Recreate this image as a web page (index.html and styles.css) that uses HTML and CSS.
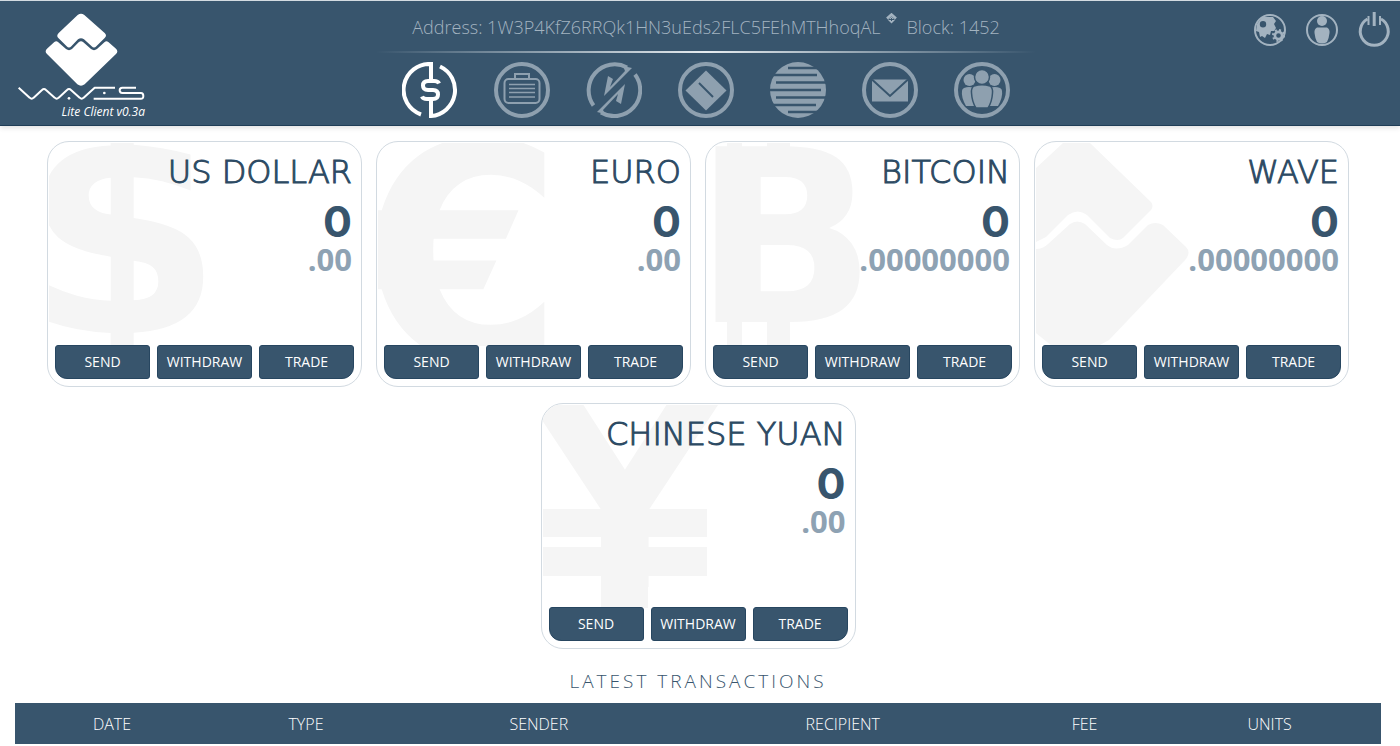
FILE: index.html
```html
<!DOCTYPE html>
<html lang="en">
<head>
<meta charset="utf-8">
<meta name="viewport" content="width=device-width, initial-scale=1">
<title>Waves Lite Client</title>
<link rel="stylesheet" href="styles.css">
</head>
<body>
<header class="topbar">
  <div class="brand">
    <svg class="brand-logo" viewBox="54 39 381 264" aria-label="Waves" role="img">
      <path fill="#fff" d="M233 45Q243 38 253 45L314 99Q322 107 314 114L289 139Q282 146 275 139L252 118Q243 111 234 118L214 139Q207 146 200 139L175 114Q168 107 176 99Z"/>
      <path fill="#fff" d="M163 126Q169 121 174 126L198 147Q207 154 216 147L236 127Q243 121 250 127L273 147Q282 154 291 147L314 126Q319 121 325 126L348 146Q356 154 348 162L254 253Q243 261 232 253L141 162Q133 154 141 146Z"/>
      <g fill="none" stroke="#fff" stroke-width="6" stroke-linejoin="round">
        <path d="M56 263L89 293Q95 299 101 293L126 270Q132 264 138 270L164 293Q170 299 176 293L201 270Q207 264 213 270L239 293Q245 299 251 293L284 263H345"/>
        <path d="M408 263H367Q359 263 359 271T367 279H423Q430 279 430 288T421 296H281"/>
      </g>
      <circle cx="207" cy="295" r="4" fill="#fff"/><circle cx="313" cy="279" r="4" fill="#fff"/>
    </svg>
    <span class="brand-version">Lite Client v0.3a</span>
  </div>

  <div class="center">
    <div class="account">
      <span>Address: 1W3P4KfZ6RRQk1HN3uEds2FLC5FEhMTHhoqAL</span>
      <svg class="account-mark" viewBox="0 0 11 11" aria-hidden="true"><path d="M1 5.500L5.500 1.500L10 5.500" fill="none" stroke="currentColor" stroke-width="2.600"/><path d="M5.500 3.500L9 7L5.500 10.500L2 7Z" fill="currentColor"/><path d="M5.500 5V8M3 6.500H8" stroke="#38556d"/></svg>
      <span>Block: 1452</span>
    </div>
    <hr class="rule">
    <nav class="nav" aria-label="Main">
      <a class="nav-item nav-item-active" href="#" aria-label="Dashboard">
        <svg viewBox="0 0 56 56" fill="none" stroke="currentColor" stroke-width="4"><path d="M19 52.500A26 26 0 0 1 29 2V19M38 4.500A26 26 0 0 1 29 54V37"/><path d="M37 21.500Q36 19 32 19H26Q21 19 21 23.500T26 28H31Q36 28 36 32.500T31 37H25Q21 37 20 34.500"/></svg>
      </a>
      <a class="nav-item" href="#" aria-label="Portfolio">
        <svg viewBox="0 0 56 56" fill="none" stroke="currentColor"><circle cx="28" cy="28" r="26" stroke-width="4"/><rect x="10.500" y="17" width="35" height="24" rx="4" stroke-width="2"/><path d="M21 17V12H35V17" stroke-width="2"/><path d="M15 22.500H41M15 26.500H41M15 30.500H41M15 35H41" stroke-width="1.500"/></svg>
      </a>
      <a class="nav-item" href="#" aria-label="Exchange">
        <svg viewBox="0 0 56 56" fill="none" stroke="currentColor" stroke-width="4"><path d="M7.500 43.500A26 26 0 0 1 41 5.500"/><path d="M49 12.500A26 26 0 0 1 15 50.500"/><g fill="currentColor" stroke="none"><path d="M37 4L46 6L18 34L22 14L27 17L24 25L39 9Z"/><path d="M19 52L11 50L39 22L35 42L30 39L32 32L17 48Z"/></g></svg>
      </a>
      <a class="nav-item" href="#" aria-label="Assets">
        <svg viewBox="0 0 56 56" fill="none" stroke="currentColor" stroke-width="4"><circle cx="28" cy="28" r="26"/><path d="M28 8.500L48.500 28.500L28 48.500L7.500 28.500Z" fill="currentColor" stroke="none"/><path d="M21 21L35 35" stroke="#38556d" stroke-width="2"/></svg>
      </a>
      <a class="nav-item" href="#" aria-label="Blocks">
        <svg viewBox="0 0 56 56"><circle cx="28" cy="28" r="28" fill="currentColor"/><path d="M18 6H48M0 13H47M6 20.500H56M0 28H51M6 35.500H56M0 43H46M18 50H48" stroke="#38556d" stroke-width="2.500"/></svg>
      </a>
      <a class="nav-item" href="#" aria-label="Messages">
        <svg viewBox="0 0 56 56" fill="none" stroke="currentColor" stroke-width="4"><circle cx="28" cy="28" r="26"/><path d="M10 17.500H46V39.500H10Z" fill="currentColor" stroke="none"/><path d="M10 17.500L28 34L46 17.500" stroke="#38556d" stroke-width="2"/></svg>
      </a>
      <a class="nav-item" href="#" aria-label="Community">
        <svg viewBox="0 0 56 56"><circle cx="28" cy="28" r="26" fill="none" stroke="currentColor" stroke-width="4"/><g fill="currentColor"><circle cx="15.500" cy="18" r="6"/><circle cx="40.500" cy="18" r="6"/><path d="M10 26Q15 24 20 26V44H12Q7 35 8 29Q8 27 10 26ZM46 26Q41 24 36 26V44H44Q49 35 48 29Q48 27 46 26Z"/><g stroke="#38556d" stroke-width="1.500"><circle cx="28" cy="15" r="7.500"/><path d="M20 24Q28 21.500 36 24Q39 26 38.500 31Q38 40 34 46H22Q18 40 17.500 31Q17 26 20 24Z"/></g></g></svg>
      </a>
    </nav>
  </div>

  <div class="tools">
    <button class="tool" type="button" aria-label="Settings">
      <svg viewBox="0 0 32 32"><circle cx="16" cy="16" r="15" fill="none" stroke="currentColor" stroke-width="2"/><path fill="currentColor" fill-rule="evenodd" d="M3 10L8 3L19 3L22 7L20 10L22 14L20 17L17 17L16 21L13 20L11 24L8 22L6 23L5 18L2 17ZM9 7A3.200 3.200 0 1 0 9 13.400A3.200 3.200 0 1 0 9 7Z"/><circle cx="24.500" cy="21.500" r="3.600" fill="none" stroke="currentColor" stroke-width="2.600"/><circle cx="24.500" cy="21.500" r="5.500" fill="none" stroke="currentColor" stroke-width="2" stroke-dasharray="2 2.300"/></svg>
    </button>
    <button class="tool" type="button" aria-label="Profile">
      <svg viewBox="0 0 32 32"><circle cx="16" cy="16" r="15" fill="none" stroke="currentColor" stroke-width="2"/><circle cx="16" cy="7" r="5" fill="currentColor"/><path d="M11 13.500H21Q24 15 23.500 19Q23 24 21 28Q16 31 11 28Q9 24 8.500 19Q8 15 11 13.500Z" fill="currentColor"/></svg>
    </button>
    <button class="tool" type="button" aria-label="Log out">
      <svg viewBox="0 0 32 32" fill="none" stroke="currentColor" stroke-width="3"><path d="M10.500 2V11M22 2V11" stroke-width="2"/><path d="M9.500 5A14 14 0 1 0 23 5"/><path d="M16.200 -2V12"/></svg>
    </button>
  </div>
</header>

<main class="page">
  <section class="cards" aria-label="Balances">
    <article class="card">
      <svg class="mark" viewBox="0 0 180 203" aria-hidden="true"><text class="glyph glyph-dollar" x="73" y="190">$</text></svg>
      <div class="card-body">
        <h2 class="card-title">US DOLLAR</h2>
        <p class="whole">0</p>
        <p class="fraction">.00</p>
      </div>
      <div class="actions"><button type="button">SEND</button><button type="button">WITHDRAW</button><button type="button">TRADE</button></div>
    </article>
    <article class="card">
      <svg class="mark" viewBox="0 0 180 203" aria-hidden="true"><text class="glyph glyph-euro" x="82" y="216">€</text></svg>
      <div class="card-body">
        <h2 class="card-title">EURO</h2>
        <p class="whole">0</p>
        <p class="fraction">.00</p>
      </div>
      <div class="actions"><button type="button">SEND</button><button type="button">WITHDRAW</button><button type="button">TRADE</button></div>
    </article>
    <article class="card">
      <svg class="mark" viewBox="0 0 180 203" aria-hidden="true"><text class="glyph glyph-bitcoin" x="78" y="179">B</text><path d="M20 0H35V8H20ZM60 0H83V8H60ZM20 176H35V203H20ZM60 176H83V203H60Z"/></svg>
      <div class="card-body">
        <h2 class="card-title">BITCOIN</h2>
        <p class="whole">0</p>
        <p class="fraction">.00000000</p>
      </div>
      <div class="actions"><button type="button">SEND</button><button type="button">WITHDRAW</button><button type="button">TRADE</button></div>
    </article>
    <article class="card">
      <svg class="mark" viewBox="0 0 180 203" aria-hidden="true"><path d="M0 25L27 0H54L115 59Q118 63 115 67L87 95Q82 99 74 95L51 72Q42 65 32 72L10 94L0 99Z"/><path d="M0 106Q7 106 12 101L34 81Q41 76 49 81L71 102Q80 109 92 102L112 82Q119 78 127 82L150 104Q155 109 150 116L73 197L62 203H16L0 190Z"/></svg>
      <div class="card-body">
        <h2 class="card-title">WAVE</h2>
        <p class="whole">0</p>
        <p class="fraction">.00000000</p>
      </div>
      <div class="actions"><button type="button">SEND</button><button type="button">WITHDRAW</button><button type="button">TRADE</button></div>
    </article>
    <article class="card">
      <svg class="mark" viewBox="0 0 180 203" aria-hidden="true"><text class="glyph glyph-yuan" x="82" y="182">Y</text><path d="M0 104H164V132H0ZM0 142H164V171H0ZM58 130H105V203H58Z"/></svg>
      <div class="card-body">
        <h2 class="card-title">CHINESE YUAN</h2>
        <p class="whole">0</p>
        <p class="fraction">.00</p>
      </div>
      <div class="actions"><button type="button">SEND</button><button type="button">WITHDRAW</button><button type="button">TRADE</button></div>
    </article>
  </section>

  <h2 class="section-title">LATEST TRANSACTIONS</h2>
  <table class="transactions">
    <colgroup><col class="col-date"><col class="col-type"><col class="col-sender"><col class="col-recipient"><col class="col-fee"><col class="col-units"></colgroup>
    <thead>
      <tr><th scope="col">DATE</th><th scope="col">TYPE</th><th scope="col">SENDER</th><th scope="col">RECIPIENT</th><th scope="col">FEE</th><th scope="col">UNITS</th></tr>
    </thead>
  </table>
</main>
</body>
</html>
```
FILE: styles.css
```css
* {
  box-sizing: border-box;
}

body {
  margin: 0;
  background: #fff;
  color: #38556d;
  font-family: "Open Sans", "Noto Sans", sans-serif;
}

.topbar {
  display: grid;
  grid-template-columns: 1fr 660px 1fr;
  padding: 0 6px 0 18px;
  background: #38556d;
  border-top: 1px solid #d3dbe1;
  border-bottom: 1px solid #1f3d56;
  box-shadow: 0 2px 5px rgba(0, 0, 0, 0.12);
}

.brand {
  display: flex;
  flex-direction: column;
  width: 127px;
  padding-top: 12px;
}

.brand-logo {
  display: block;
  width: 127px;
  height: 88px;
}

.brand-version {
  color: #fff;
  font-size: 12px;
  font-style: italic;
  line-height: 22px;
  text-align: right;
  white-space: nowrap;
}

.center {
  padding: 12px 0 7px;
}

.account {
  display: flex;
  justify-content: center;
  gap: 5px;
  color: #a3b3c0;
  font-size: 18px;
  font-weight: 300;
  line-height: 28px;
  white-space: nowrap;
}

.account-mark {
  width: 11px;
  height: 11px;
  margin-right: 5px;
}

.rule {
  height: 2px;
  margin: 10px 0 9px;
  border: 0;
  background: linear-gradient(to right, transparent, #e6ecf0 50%, transparent);
}

.nav {
  display: flex;
  justify-content: center;
  gap: 36px;
}

.nav-item {
  color: #8ea0af;
}

.nav-item-active {
  color: #fff;
}

.nav-item svg {
  display: block;
  width: 56px;
  height: 56px;
}

.tools {
  display: flex;
  justify-content: flex-end;
  align-items: flex-start;
  gap: 20px;
  padding: 13px 4px 0 0;
}

.tool {
  padding: 0;
  border: 0;
  background: none;
  color: #a3b3c0;
}

.tool svg {
  display: block;
  width: 32px;
  height: 32px;
  overflow: visible;
}

.page {
  padding: 15px 19px 0 15px;
}

.cards {
  display: flex;
  flex-wrap: wrap;
  justify-content: center;
  gap: 16px 14px;
}

.card {
  position: relative;
  width: 315px;
  padding: 0 7px 7px;
  border: 1px solid #d2dae1;
  border-radius: 22px;
  overflow: hidden;
}

.mark {
  position: absolute;
  top: 1px;
  left: 1px;
  width: 180px;
  height: 203px;
  fill: #f5f5f5;
}

.glyph {
  font-family: "DejaVu Sans", sans-serif;
  font-weight: 700;
  text-anchor: middle;
}

.glyph-dollar {
  font-size: 290px;
}

.glyph-euro {
  font-size: 300px;
}

.glyph-bitcoin {
  font-size: 240px;
}

.glyph-yuan {
  font-size: 250px;
}

.card-body {
  position: relative;
  min-height: 203px;
  padding: 10px 2px 0;
  text-align: right;
}

.card-title {
  margin: 0;
  color: #2c4a63;
  font-family: "DejaVu Sans", Inter, sans-serif;
  font-size: 32px;
  font-weight: 200;
  line-height: 40px;
  -webkit-text-stroke: 1px #2c4a63;
}

.whole,
.fraction {
  margin: 0;
  font-weight: 700;
}

.whole {
  font-family: Inter, sans-serif;
  font-size: 43px;
  line-height: 58px;
}

.fraction {
  color: #8ea2b3;
  font-size: 31px;
  line-height: 18px;
}

.actions {
  position: relative;
  display: grid;
  grid-template-columns: repeat(3, 1fr);
  gap: 7px;
}

.actions button {
  height: 34px;
  padding: 0;
  border: 1px solid #274660;
  border-radius: 3px;
  background: #38556d;
  color: #fff;
  font: 400 14px/20px "Open Sans", "Noto Sans", sans-serif;
}

.actions button:first-child {
  border-bottom-left-radius: 12px;
}

.actions button:last-child {
  border-bottom-right-radius: 12px;
}

.section-title {
  margin: 19px 0 8px;
  font-size: 19px;
  font-weight: 300;
  letter-spacing: 3px;
  line-height: 27px;
  text-align: center;
}

.transactions {
  width: 100%;
  table-layout: fixed;
  border-collapse: collapse;
  background: #38556d;
}

.transactions th {
  height: 41px;
  padding: 0;
  color: #fff;
  font-size: 16px;
  font-weight: 300;
}

.col-date,
.col-type {
  width: 14.2%;
}

.col-sender {
  width: 19.9%;
}

.col-recipient {
  width: 24.6%;
}

.col-fee {
  width: 10.8%;
}

.col-units {
  width: 16.3%;
}
```
